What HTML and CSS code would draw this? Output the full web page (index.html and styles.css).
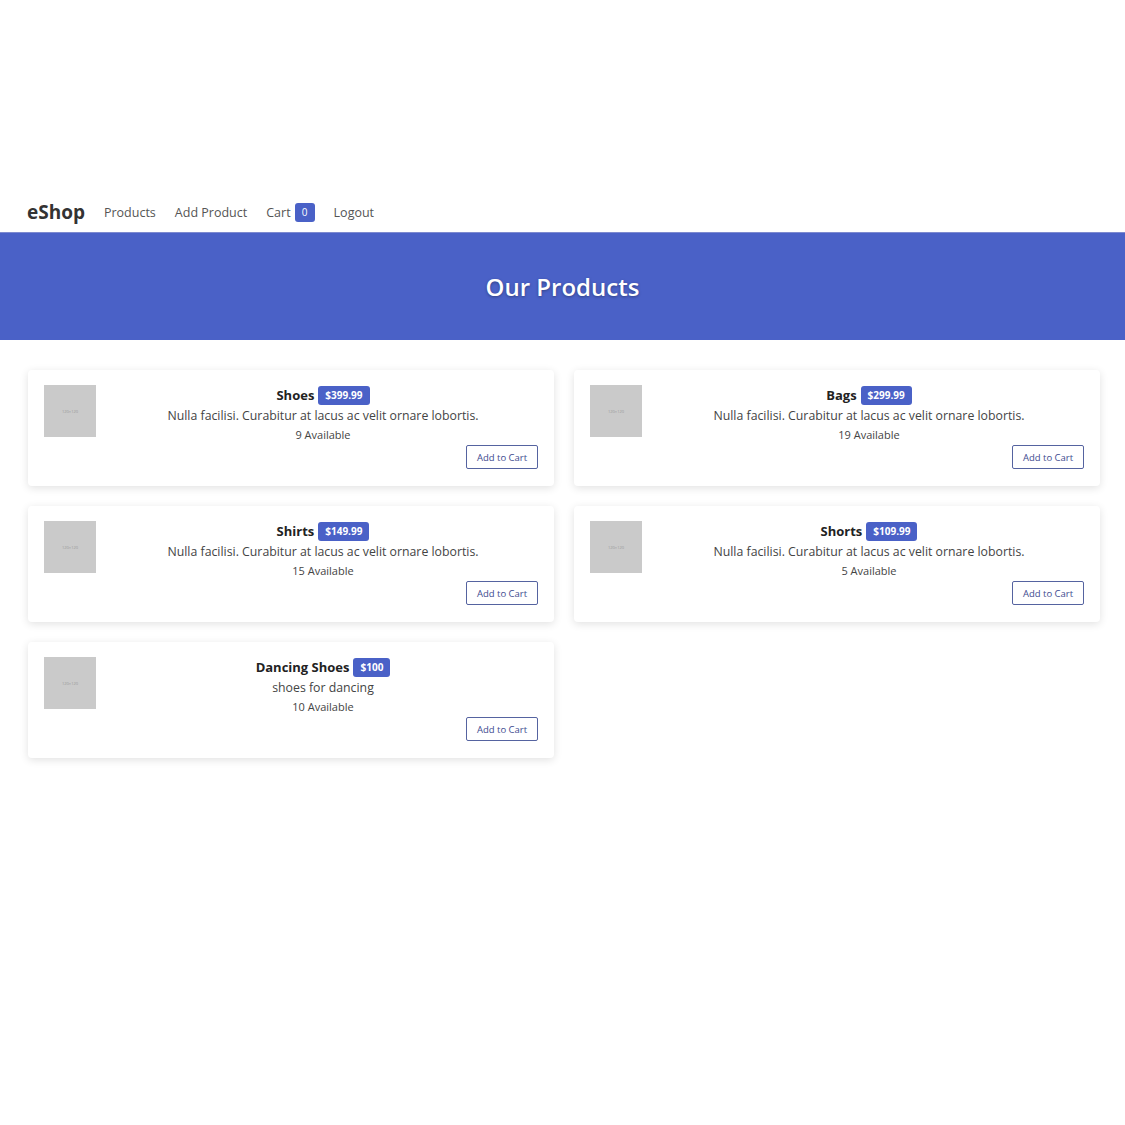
FILE: index.html
```html
<!DOCTYPE html>
<html>
<head>
<meta charset="utf-8">
<link rel="stylesheet" href="styles.css">
</head>
<body>
<div class="spacer"></div>
<nav class="navbar">
  <span class="brand">eShop</span>
  <a class="nav-link">Products</a>
  <a class="nav-link">Add Product</a>
  <a class="nav-link">Cart <span class="count">0</span></a>
  <a class="nav-link">Logout</a>
</nav>
<header class="hero"><h1>Our Products</h1></header>
<main class="grid">
  <div class="card">
    <div class="thumb"><span>120×120</span></div>
    <div class="info">
      <div class="title">Shoes <span class="price">$399.99</span></div>
      <div class="desc">Nulla facilisi. Curabitur at lacus ac velit ornare lobortis.</div>
      <div class="stock">9 Available</div>
      <div class="actions"><button class="btn">Add to Cart</button></div>
    </div>
  </div>
  <div class="card">
    <div class="thumb"><span>120×120</span></div>
    <div class="info">
      <div class="title">Bags <span class="price">$299.99</span></div>
      <div class="desc">Nulla facilisi. Curabitur at lacus ac velit ornare lobortis.</div>
      <div class="stock">19 Available</div>
      <div class="actions"><button class="btn">Add to Cart</button></div>
    </div>
  </div>
  <div class="card">
    <div class="thumb"><span>120×120</span></div>
    <div class="info">
      <div class="title">Shirts <span class="price">$149.99</span></div>
      <div class="desc">Nulla facilisi. Curabitur at lacus ac velit ornare lobortis.</div>
      <div class="stock">15 Available</div>
      <div class="actions"><button class="btn">Add to Cart</button></div>
    </div>
  </div>
  <div class="card">
    <div class="thumb"><span>120×120</span></div>
    <div class="info">
      <div class="title">Shorts <span class="price">$109.99</span></div>
      <div class="desc">Nulla facilisi. Curabitur at lacus ac velit ornare lobortis.</div>
      <div class="stock">5 Available</div>
      <div class="actions"><button class="btn">Add to Cart</button></div>
    </div>
  </div>
  <div class="card">
    <div class="thumb"><span>120×120</span></div>
    <div class="info">
      <div class="title">Dancing Shoes <span class="price">$100</span></div>
      <div class="desc">shoes for dancing</div>
      <div class="stock">10 Available</div>
      <div class="actions"><button class="btn">Add to Cart</button></div>
    </div>
  </div>
</main>
</body>
</html>
```
FILE: styles.css
```css
* { box-sizing: border-box; }
body {
  margin: 0;
  font-family: "Open Sans", "Noto Sans", sans-serif;
  color: #333;
  background: #fff;
}
.spacer { height: 192px; }
.navbar {
  height: 40px;
  display: flex;
  align-items: center;
  padding: 0 27px;
  gap: 19px;
}
.brand {
  font-size: 19px;
  font-weight: 700;
  color: #333;
  margin-right: 0;
}
.nav-link {
  font-size: 12.5px;
  color: #555;
  display: flex;
  align-items: center;
  gap: 4px;
}
.count {
  display: inline-flex;
  align-items: center;
  justify-content: center;
  width: 20px;
  height: 19px;
  border-radius: 3px;
  background: #4a61c7;
  color: #fff;
  font-size: 10px;
}
.hero {
  height: 108px;
  background: #4a61c7;
  border-top: 1px solid #7d8ad0;
  display: flex;
  align-items: center;
  justify-content: center;
}
.hero h1 {
  margin: 0;
  color: #fff;
  font-size: 24px;
  font-weight: 600;
  text-shadow: 0 1px 3px rgba(0,0,0,0.35);
}
.grid {
  display: grid;
  grid-template-columns: 526px 526px;
  gap: 20px;
  padding: 30px 28px;
}
.card {
  display: flex;
  align-items: flex-start;
  padding: 15px 16px 17px;
  border-radius: 4px;
  background: #fff;
  box-shadow: 0 2px 8px rgba(0,0,0,0.12);
}
.thumb {
  width: 52px;
  height: 52px;
  flex: none;
  background: #cacaca;
  display: flex;
  align-items: center;
  justify-content: center;
}
.thumb span {
  font-size: 4px;
  color: #999;
}
.info {
  flex: 1;
  margin-left: 12px;
  text-align: center;
}
.title {
  height: 20px;
  display: flex;
  align-items: center;
  justify-content: center;
  gap: 4px;
  font-size: 13px;
  font-weight: 700;
  color: #222;
}
.price {
  display: inline-flex;
  align-items: center;
  height: 19px;
  padding: 0 7px;
  border-radius: 3px;
  background: #4a61c7;
  color: #fff;
  font-size: 10px;
  font-weight: 700;
}
.desc {
  height: 20px;
  line-height: 21px;
  font-size: 12.3px;
  color: #444;
}
.stock {
  height: 20px;
  line-height: 20px;
  font-size: 11px;
  color: #444;
}
.actions {
  display: flex;
  justify-content: flex-end;
}
.btn {
  width: 72px;
  height: 24px;
  padding: 0;
  background: #fff;
  border: 1px solid #5563a0;
  border-radius: 2px;
  color: #3e4c8f;
  font-family: inherit;
  font-size: 9.5px;
}
```
